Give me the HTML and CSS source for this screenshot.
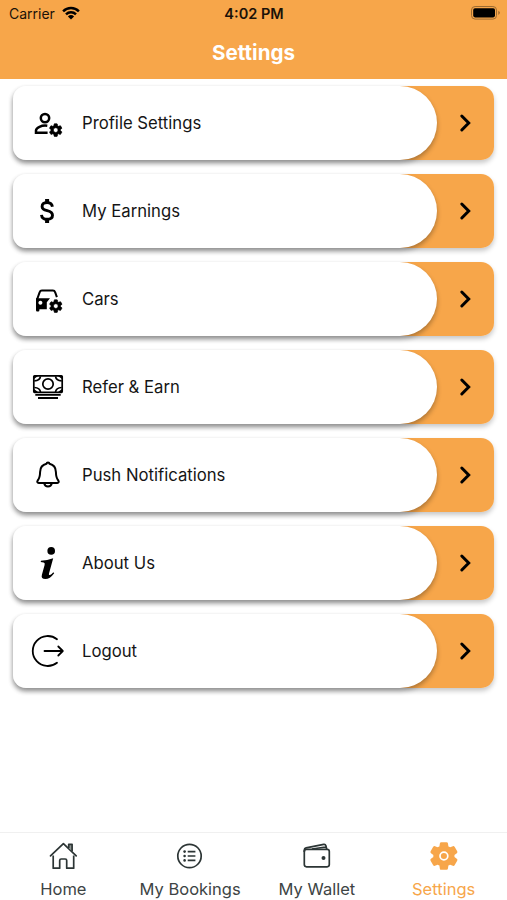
FILE: index.html
```html
<!DOCTYPE html>
<html lang="en">
<head>
    <meta charset="UTF-8">
    <meta name="viewport" content="width=device-width, initial-scale=1.0">
    <title>Settings</title>
    <link rel="stylesheet" href="styles.css">
</head>
<body>
    <!-- shared shapes -->
    <svg class="defs">
        <symbol id="gear" viewBox="0 0 24 24">
            <path d="M19.14 12.94c.04-.3.06-.61.06-.94 0-.32-.02-.64-.07-.94l2.03-1.58c.18-.14.23-.41.12-.61l-1.92-3.32c-.12-.22-.37-.29-.59-.22l-2.39.96c-.5-.38-1.03-.7-1.62-.94L14.4 2.81c-.04-.24-.24-.41-.48-.41h-3.84c-.24 0-.43.17-.47.41l-.36 2.54c-.59.24-1.13.57-1.62.94l-2.39-.96c-.22-.08-.47 0-.59.22L2.74 8.87c-.12.21-.08.47.12.61l2.03 1.58c-.05.3-.09.63-.09.94s.02.64.07.94l-2.03 1.58c-.18.14-.23.41-.12.61l1.92 3.32c.12.22.37.29.59.22l2.39-.96c.5.38 1.03.7 1.62.94l.36 2.54c.05.24.24.41.48.41h3.84c.24 0 .44-.17.47-.41l.36-2.54c.59-.24 1.13-.56 1.62-.94l2.39.96c.22.08.47 0 .59-.22l1.92-3.32c.12-.22.07-.47-.12-.61zM12 15.6A3.6 3.6 0 1 1 12 8.4a3.6 3.6 0 0 1 0 7.2z"/>
        </symbol>
        <symbol id="chevron" viewBox="0 0 14 20">
            <path d="M2.8 3l6.9 7-6.9 7" fill="none" stroke="#000" stroke-width="3" stroke-linecap="round"/>
        </symbol>
    </svg>

    <div class="screen">
        <header class="header">
            <div class="status">
                <div class="carrier">
                    <span>Carrier</span>
                    <svg class="wifi" viewBox="0 0 18 14">
                        <path d="M1.1 5.3a11.4 11.4 0 0 1 15.8 0M4 8.3a7.2 7.2 0 0 1 10 0" fill="none" stroke="#000" stroke-width="2.5"/>
                        <path d="M9 13.6L5.9 10.4a4.5 4.5 0 0 1 6.2 0z"/>
                    </svg>
                </div>
                <div class="time">4:02 PM</div>
                <svg class="battery" viewBox="0 0 30 14">
                    <rect x=".5" y=".5" width="25" height="12.6" rx="3.6" fill="none" stroke="#9c6a30"/>
                    <rect x="2.2" y="2.2" width="21.8" height="9.2" rx="1.8"/>
                    <path d="M27.3 4.7q3.2 2.1 0 4.2z" fill="#9c6a30"/>
                </svg>
            </div>
            <h1 class="title">Settings</h1>
        </header>

        <main class="list">
            <a class="row">
                <div class="card">
                    <svg class="icon" viewBox="0 0 36 36">
                        <circle cx="15" cy="13.1" r="4.2" fill="none" stroke="#000" stroke-width="2.5"/>
                        <path d="M17.3 20.7C11.5 19.9 6 22.7 6 25.6v2.2h11.6" fill="none" stroke="#000" stroke-width="2.5"/>
                        <use class="small-gear" href="#gear" x="17.8" y="17.2" width="15.8" height="15.8"/>
                    </svg>
                    <span class="label">Profile Settings</span>
                </div>
                <svg class="chevron"><use href="#chevron"/></svg>
            </a>
            <a class="row">
                <div class="card">
                    <svg class="icon" viewBox="0 0 36 36">
                        <path d="M22.4 13.8C22 10.8 20 9.6 17.1 9.6c-3 0-5 1.5-5 3.8 0 2.7 2.3 3.6 5.1 4.3 3 .8 5.3 1.8 5.3 4.6 0 2.5-2.2 4-5.3 4-3.2 0-5.4-1.5-5.7-4.5" fill="none" stroke="#000" stroke-width="2.9"/>
                        <path d="M17.1 6v3.5M17.1 26.5V30" stroke="#000" stroke-width="4"/>
                    </svg>
                    <span class="label">My Earnings</span>
                </div>
                <svg class="chevron"><use href="#chevron"/></svg>
            </a>
            <a class="row">
                <div class="card">
                    <svg class="icon" viewBox="0 0 36 36">
                        <path d="M7.1 18.3l2.5-7q.6-1.7 2.3-1.7h11q1.7 0 2.3 1.7l1.7 4.9" fill="none" stroke="#000" stroke-width="2"/>
                        <path fill-rule="evenodd" d="M6 17.2h14l-3.2 4v7H9.4v1.1q0 1.2-1.2 1.2H7.1q-1.1 0-1.1-1.2zM10.4 19.7a2 2 0 1 0 .01 0z"/>
                        <use class="small-gear" href="#gear" x="17.9" y="17.2" width="15.8" height="15.8"/>
                    </svg>
                    <span class="label">Cars</span>
                </div>
                <svg class="chevron"><use href="#chevron"/></svg>
            </a>
            <a class="row">
                <div class="card">
                    <svg class="icon" viewBox="0 0 36 36">
                        <g fill="none" stroke="#000" stroke-width="1.7">
                            <rect x="3.8" y="6.9" width="28.4" height="16.4" rx=".7"/>
                            <circle cx="18" cy="15" r="5.2"/>
                            <path d="M10.5 7.3q-.6 4.2-6.2 4.5M25.5 7.3q.6 4.2 6.2 4.5M10.5 23q-.6-4.2-6.2-4.5M25.5 23q.6-4.2 6.2-4.5"/>
                            <path d="M5.3 25.8h25.4M8 29h20" stroke-width="1.8"/>
                        </g>
                        <path d="M4 7h4L4 10zM32 7h-4l4 3zM4 23h4l-4-3zM32 23h-4l4-3z"/>
                    </svg>
                    <span class="label">Refer &amp; Earn</span>
                </div>
                <svg class="chevron"><use href="#chevron"/></svg>
            </a>
            <a class="row">
                <div class="card">
                    <svg class="icon" viewBox="0 0 36 36">
                        <path d="M18 5.4c-.8 0-1.4.6-1.5 1.4-4.2.9-6.3 4-6.4 8.2-.1 4.6-.7 6.5-2.4 8.5-.9 1.2-.4 2.4 1 2.4h18.6c1.4 0 1.9-1.2 1-2.4-1.7-2-2.3-3.9-2.4-8.5-.1-4.2-2.2-7.3-6.4-8.2C19.4 6 18.8 5.4 18 5.4zM14.2 26.2a3.9 4.3 0 0 0 7.6 0" fill="none" stroke="#000" stroke-width="2" stroke-linejoin="round"/>
                    </svg>
                    <span class="label">Push Notifications</span>
                </div>
                <svg class="chevron"><use href="#chevron"/></svg>
            </a>
            <a class="row">
                <div class="card">
                    <svg class="icon" viewBox="0 0 36 36">
                        <circle cx="21.2" cy="5.9" r="3.8"/>
                        <path d="M11 15.7q6.2-.3 12.2-2.5l-4.2 15.3q-.5 2 1 1.400 1.7-.6 3.3-2.6l.9.9q-4.3 5.8-8.8 5.9-4.7 0-3.5-4.3l2.7-9.9q.6-2.2-1-2.5l-2.900-.4z"/>
                    </svg>
                    <span class="label">About Us</span>
                </div>
                <svg class="chevron"><use href="#chevron"/></svg>
            </a>
            <a class="row">
                <div class="card">
                    <svg class="icon" viewBox="0 0 36 36">
                        <path d="M27 6.2A15 15 0 1 0 27 29.8M14.5 18h18.2M28.3 13.5l4.500 4.500-4.500 4.500" fill="none" stroke="#000" stroke-width="1.8" stroke-linecap="round" stroke-linejoin="round"/>
                    </svg>
                    <span class="label">Logout</span>
                </div>
                <svg class="chevron"><use href="#chevron"/></svg>
            </a>
        </main>

        <nav class="tabs">
            <a class="tab">
                <svg class="tab-icon" viewBox="0 0 30 30">
                    <g fill="none" stroke="#2c3535" stroke-width="1.7" stroke-linejoin="round">
                        <path d="M5.2 14.5v12.7h6.5v-7.7q0-1.5 1.5-1.5h4q1.5 0 1.5 1.5v7.7h7V14.5"/>
                        <path d="M2.5 14.8L15.4 2.6l12.8 12.2" stroke-linecap="round"/>
                        <path d="M20.7 7V3.3h3.4v7" fill="#8d9492"/>
                    </g>
                </svg>
                <span>Home</span>
            </a>
            <a class="tab">
                <svg class="tab-icon" viewBox="0 0 30 30">
                    <circle cx="14.5" cy="15" r="11.7" fill="none" stroke="#2c3535" stroke-width="1.7"/>
                    <path d="M12.7 10.6h7.7M12.7 15h7.7M12.7 19.4h7.7" stroke="#2c3535" stroke-width="1.7"/>
                    <g fill="#2c3535">
                        <circle cx="9.6" cy="10.6" r="1.3"/>
                        <circle cx="9.6" cy="15" r="1.3"/>
                        <circle cx="9.6" cy="19.4" r="1.3"/>
                    </g>
                </svg>
                <span>My Bookings</span>
            </a>
            <a class="tab">
                <svg class="tab-icon" viewBox="0 0 30 30">
                    <g fill="none" stroke="#2c3535" stroke-width="1.7" stroke-linejoin="round">
                        <rect x="2.3" y="8.3" width="25" height="17.5" rx="2.2"/>
                        <path d="M2.3 11V9q0-1.6 1.8-2.1L21.7 3.4q1.7-.3 2.2 1.3l.8 3.4M10 8l13.5-2"/>
                    </g>
                    <circle cx="21.5" cy="17" r="2" fill="#2c3535"/>
                </svg>
                <span>My Wallet</span>
            </a>
            <a class="tab active">
                <svg class="tab-icon" viewBox="0 0 30 30">
                    <use class="tab-gear" href="#gear" x="-1.4" y="-1.3" width="32.6" height="32.6"/>
                    <circle cx="14.9" cy="15" r="6"/>
                    <circle cx="14.9" cy="15" r="3.9" fill="none" stroke="#fff" stroke-width="1.7"/>
                </svg>
                <span>Settings</span>
            </a>
        </nav>
    </div>
</body>
</html>
```
FILE: styles.css
```css
*{
    margin:0;
    padding:0;
    box-sizing:border-box;
}
body{
    font-family:Inter, "Liberation Sans", sans-serif;
    background-color:#fff;
    color:#151515;
}
.defs{
    position:absolute;
    width:0;
    height:0;
}
.screen{
    display:flex;
    flex-direction:column;
    height:900px;
    width:507px;
    overflow:hidden;
}

/* header */
.header{
    height:79px;
    background-color:#f7a64a;
}
.status{
    display:grid;
    grid-template-columns:1fr auto 1fr;
    align-items:center;
    height:28px;
    padding:0 8px 0 9px;
    font-size:14px;
    color:#1b1208;
}
.carrier{
    display:flex;
    align-items:center;
    gap:7px;
    margin-top:-1px;
}
.wifi{
    width:18px;
    height:14px;
    margin-top:-1px;
}
.time{
    font-size:14.5px;
    font-weight:600;
    margin-top:-1px;
}
.battery{
    width:30px;
    height:14px;
    justify-self:end;
    margin:-2px -2px 0 0;
}
.title{
    font-size:20.6px;
    font-weight:700;
    line-height:24px;
    margin-top:13px;
    text-align:center;
    color:#fff;
}

/* settings rows */
.list{
    display:flex;
    flex-direction:column;
    gap:14px;
    flex:1;
    padding:7px 13px 0;
}
.row{
    display:flex;
    align-items:center;
    height:74px;
    border-radius:13px;
    background:linear-gradient(to right, #fff 50%, #f7a64a 50%);
    box-shadow:0 3px 5px rgba(0,0,0,0.22);
}
.card{
    display:flex;
    align-items:center;
    width:423.5px;
    height:74px;
    padding-left:17px;
    border-radius:13px 37px 37px 13px;
    background-color:#fff;
    box-shadow:0 3px 5px rgba(0,0,0,0.3);
}
.icon{
    width:36px;
    height:36px;
    margin-right:16px;
}
.small-gear{
    stroke:#000;
    stroke-width:1px;
}
.label{
    font-size:16.7px;
}
.chevron{
    width:14px;
    height:20px;
    margin-left:22px;
}

/* bottom tabs */
.tabs{
    display:grid;
    grid-template-columns:repeat(4, 1fr);
    height:68px;
    border-top:1px solid #f0f0f0;
}
.tab{
    display:flex;
    flex-direction:column;
    align-items:center;
    padding-top:8px;
    font-size:16.5px;
    line-height:20px;
    color:#3d4444;
}
.tab-icon{
    width:30px;
    height:30px;
    margin-bottom:8px;
    overflow:visible;
}
.active{
    color:#f7a64a;
    fill:#f7a64a;
}
.tab-gear{
    stroke:#f7a64a;
    stroke-width:1.2px;
}
```
